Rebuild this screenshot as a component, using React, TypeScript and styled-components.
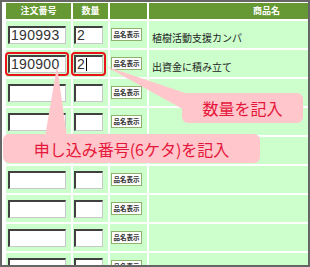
import React from 'react';
import styled, { createGlobalStyle } from 'styled-components';

const Global = createGlobalStyle`
  html, body { margin: 0; padding: 0; background: #fff; }
  body { font-family: "Noto Sans CJK JP", "Noto Sans", sans-serif; }
`;

const Frame = styled.div`
  position: relative;
  width: 310px;
  height: 267px;
  box-sizing: border-box;
  border: 2px solid #666;
  background: #fff;
  overflow: hidden;
  padding: 0 0 0 2px;
`;

const Table = styled.table`
  border-collapse: separate;
  border-spacing: 2px;
  table-layout: fixed;
  width: 382px;
  margin-top: -1px;
`;

const HeadCell = styled.th<{ $w: number }>`
  width: ${(p) => p.$w}px;
  height: 16px;
  padding: 0;
  background: #669933;
  color: #fff;
  font-family: "Noto Sans CJK JP", sans-serif;
  font-weight: bold;
  font-size: 9px;
  line-height: 16px;
  text-align: center;
`;

const Cell = styled.td<{ $pl: number }>`
  height: 27px;
  padding: 0 0 0 ${(p) => p.$pl}px;
  background: #ccffcc;
  vertical-align: middle;
`;

const CellInner = styled.div`
  display: flex;
  align-items: center;
`;

const Field = styled.div<{ $w: number }>`
  width: ${(p) => p.$w}px;
  height: 18px;
  box-sizing: border-box;
  border-style: solid;
  border-width: 2px 1px 1px 2px;
  border-color: #404040 #c8c8c8 #c8c8c8 #404040;
  background: #fff;
  padding-left: 1px;
  font-family: "Liberation Sans", Arial, sans-serif;
  font-size: 14px;
  letter-spacing: 0.3px;
  line-height: 15px;
  color: #333;
  display: flex;
  align-items: center;
  white-space: nowrap;
`;

const Highlight = styled.div`
  border: 2px solid #e8131b;
  border-radius: 4px;
  padding: 1px;
  margin: -3px;
  display: flex;
`;

const Caret = styled.span`
  display: inline-block;
  width: 1px;
  height: 13px;
  background: #000;
  margin-left: 1px;
`;

const NameButton = styled.button`
  width: 31px;
  height: 13px;
  padding: 0;
  border: 1px solid #8fb06f;
  background: #fff;
  color: #333;
  font-family: "Noto Sans CJK JP", sans-serif;
  font-weight: bold;
  font-size: 6.5px;
  line-height: 11px;
  white-space: nowrap;
`;

const NameText = styled.span`
  font-family: "Noto Sans CJK JP", sans-serif;
  font-size: 10px;
  color: #222;
`;

const Callout = styled.div<{ $l: number; $t: number; $w: number; $h: number }>`
  position: absolute;
  left: ${(p) => p.$l}px;
  top: ${(p) => p.$t}px;
  width: ${(p) => p.$w}px;
  height: ${(p) => p.$h}px;
  background: #ffc6cc;
  border-radius: 6px;
  color: #e5173a;
  font-family: "Noto Sans CJK JP", sans-serif;
  font-size: 16px;
  display: flex;
  align-items: center;
  justify-content: center;
  white-space: nowrap;
`;

const Pointers = styled.svg`
  position: absolute;
  left: 0;
  top: 0;
  width: 306px;
  height: 263px;
`;

type Row = { no: string; qty: string; name: string; hl?: boolean };

const rows: Row[] = [
  { no: '190993', qty: '2', name: '植樹活動支援カンパ' },
  { no: '190900', qty: '2', name: '出資金に積み立て', hl: true },
  { no: '', qty: '', name: '' },
  { no: '', qty: '', name: '' },
  { no: '', qty: '', name: '' },
  { no: '', qty: '', name: '' },
  { no: '', qty: '', name: '' },
  { no: '', qty: '', name: '' },
  { no: '', qty: '', name: '' },
];

export default function App() {
  return (
    <>
      <Global />
      <Frame>
        <Table>
          <thead>
            <tr>
              <HeadCell $w={65}>注文番号</HeadCell>
              <HeadCell $w={35}>数量</HeadCell>
              <HeadCell $w={37}></HeadCell>
              <HeadCell $w={235}>商品名</HeadCell>
            </tr>
          </thead>
          <tbody>
            {rows.map((r, i) => {
              const no = <Field $w={58}>{r.no}</Field>;
              const qty = (
                <Field $w={29}>
                  {r.qty}
                  {r.hl && <Caret />}
                </Field>
              );
              return (
                <tr key={i}>
                  <Cell $pl={2}>
                    <CellInner>{r.hl ? <Highlight>{no}</Highlight> : no}</CellInner>
                  </Cell>
                  <Cell $pl={1}>
                    <CellInner>{r.hl ? <Highlight>{qty}</Highlight> : qty}</CellInner>
                  </Cell>
                  <Cell $pl={1}>
                    <CellInner>
                      <NameButton>品名表示</NameButton>
                    </CellInner>
                  </Cell>
                  <Cell $pl={3}>
                    <NameText>{r.name}</NameText>
                  </Cell>
                </tr>
              );
            })}
          </tbody>
        </Table>
        <Pointers viewBox="2 2 306 263">
          <polygon points="57,66 45,137 67,137" fill="#ffc6cc" />
          <polygon points="105,66 188,94 188,112" fill="#ffc6cc" />
        </Pointers>
        <Callout $l={180} $t={91} $w={121} $h={30}>数量を記入</Callout>
        <Callout $l={1} $t={132} $w={257} $h={29}>申し込み番号(6ケタ)を記入</Callout>
      </Frame>
    </>
  );
}
